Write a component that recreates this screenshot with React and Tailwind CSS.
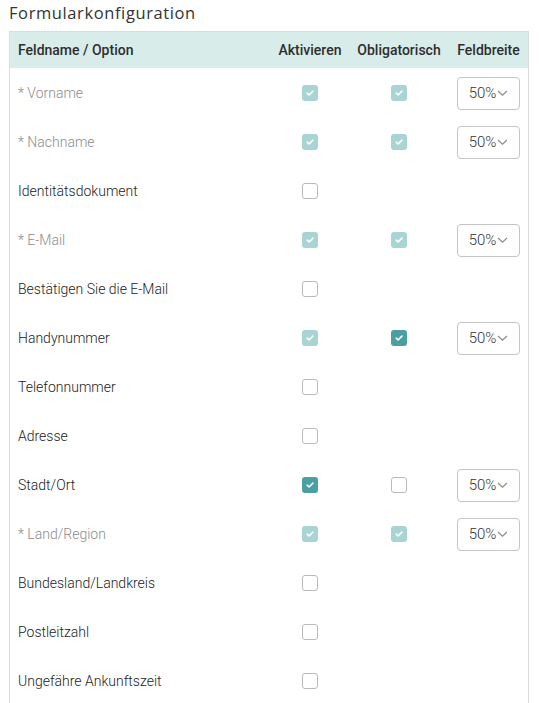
import React from "react";

const rows = [
  { label: "* Vorname", locked: true, active: true, required: true, width: true },
  { label: "* Nachname", locked: true, active: true, required: true, width: true },
  { label: "Identitätsdokument", active: false },
  { label: "* E-Mail", locked: true, active: true, required: true, width: true },
  { label: "Bestätigen Sie die E-Mail", active: false },
  { label: "Handynummer", activeLocked: true, active: true, required: true, width: true },
  { label: "Telefonnummer", active: false },
  { label: "Adresse", active: false },
  { label: "Stadt/Ort", active: true, required: false, width: true },
  { label: "* Land/Region", locked: true, active: true, required: true, width: true },
  { label: "Bundesland/Landkreis", active: false },
  { label: "Postleitzahl", active: false },
  { label: "Ungefähre Ankunftszeit", active: false },
];

function Checkbox({ checked, disabled }) {
  if (!checked) {
    return <span className="block w-4 h-4 rounded-[3px] border border-[#b9b9b9] bg-white" />;
  }
  return (
    <span
      className={
        "flex items-center justify-center w-4 h-4 rounded-[3px] " +
        (disabled ? "bg-[#a9d4d6]" : "bg-[#4a9fa3]")
      }
    >
      <svg width="10" height="10" viewBox="0 0 10 10" fill="none">
        <path d="M2.2 5.2l1.9 1.8 3.8-3.9" stroke="white" strokeWidth="1.6" strokeLinecap="round" strokeLinejoin="round" />
      </svg>
    </span>
  );
}

function WidthSelect() {
  return (
    <div className="flex items-center justify-center w-[63px] h-[33px] rounded-[4px] border border-[#c4c4c4] bg-white text-[15px] font-light text-[#333]">
      <span>50%</span>
      <svg width="11" height="7" viewBox="0 0 11 7" fill="none" className="ml-[1px] mt-[1px]">
        <path d="M1 1l4.5 4.2L10 1" stroke="#888" strokeWidth="1.1" />
      </svg>
    </div>
  );
}

export default function App() {
  return (
    <div className="bg-white min-h-screen pt-[3px] font-['Roboto',sans-serif]">
      <h2 className="ml-[9px] text-[16.5px] tracking-[0.6px] text-[#333] font-['Open_Sans',sans-serif] font-medium leading-[20px]">
        Formularkonfiguration
      </h2>
      <div className="ml-[9px] mt-[8px] w-[520px] border border-[#dcdcdc]">
        <div className="grid grid-cols-[261px_78px_100px_79px] h-[36px] items-center bg-[#d8ecea] text-[14px] font-medium text-[#2e2e2e]">
          <div className="pl-2">Feldname / Option</div>
          <div className="text-center">Aktivieren</div>
          <div className="text-center">Obligatorisch</div>
          <div className="text-center">Feldbreite</div>
        </div>
        {rows.map((r) => (
          <div key={r.label} className="grid grid-cols-[261px_78px_100px_79px] h-[49px] items-center text-[14px] font-light pt-[1px]">
            <div className={"pl-2 " + (r.locked ? "text-[#8c8c8c]" : "text-[#222]")}>{r.label}</div>
            <div className="flex justify-center">
              <Checkbox checked={r.active} disabled={r.locked || r.activeLocked} />
            </div>
            <div className="flex justify-center">
              {r.active && <Checkbox checked={r.required} disabled={r.locked} />}
            </div>
            <div className="flex justify-center">{r.width && <WidthSelect />}</div>
          </div>
        ))}
      </div>
    </div>
  );
}
